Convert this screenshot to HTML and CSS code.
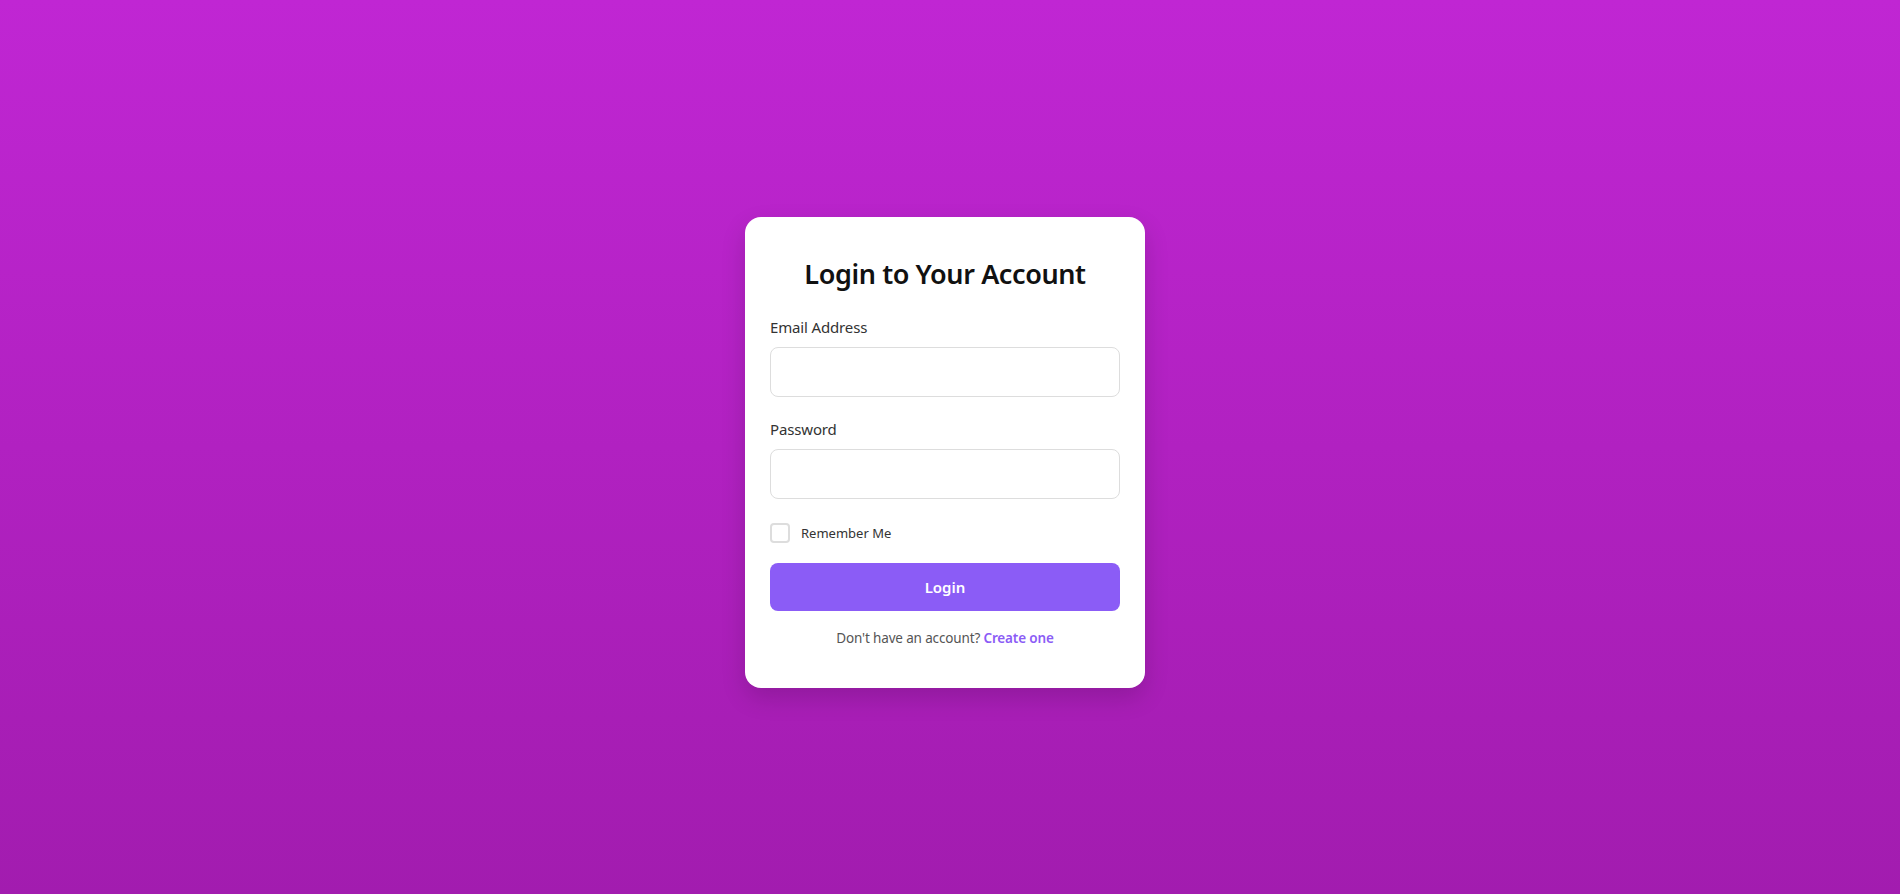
FILE: index.html
```html
<!DOCTYPE html>
<html>

<head>
    <meta charset="utf-8">
    <title>Login</title>
    <link rel="stylesheet" href="styles.css">
</head>

<body>
    <div class="login-card">
        <h2>Login to Your Account</h2>
        <form action="/login" method="post">
            <div class="field">
                <label for="email">Email Address</label>
                <input type="email" id="email" name="email">
            </div>
            <div class="field">
                <label for="password">Password</label>
                <input type="password" id="password" name="password">
            </div>
            <div class="remember">
                <input type="checkbox" id="remember" name="remember">
                <label for="remember">Remember Me</label>
            </div>
            <button type="submit">Login</button>
        </form>
        <p class="signup">Don't have an account? <a href="#">Create one</a></p>
    </div>
</body>

</html>
```

FILE: styles.css
```css
* {
  box-sizing: border-box;
}

body {
  margin: 0;
  min-height: 100vh;
  /* small offsets to sit the card where the original does */
  padding: 11px 10px 0 0;
  display: flex;
  align-items: center;
  justify-content: center;
  font-family: "Noto Sans", "Open Sans", sans-serif;
  background: linear-gradient(to bottom, #c026d3, #a21caf);
}

.login-card {
  width: 400px;
  padding: 39px 25px 40px;
  background: #fff;
  border-radius: 16px;
  box-shadow: 0 10px 25px rgba(0, 0, 0, 0.15);
}

h2 {
  margin: 0 0 23px;
  font-size: 27px;
  line-height: 36px;
  font-weight: 600;
  letter-spacing: -0.4px;
  color: #111;
  text-align: center;
}

.field {
  margin-bottom: 20px;
}

.field label {
  display: block;
  margin-bottom: 8px;
  font-size: 15px;
  line-height: 24px;
  letter-spacing: -0.15px;
  color: #333;
}

.field input {
  display: block;
  width: 100%;
  height: 50px;
  padding: 0 12px;
  font: 15px "Noto Sans", sans-serif;
  border: 1px solid #ddd;
  border-radius: 8px;
  outline: none;
}

.remember {
  display: flex;
  align-items: center;
  gap: 11px;
  margin-top: 24px;
  margin-bottom: 20px;
}

.remember input {
  appearance: none;
  margin: 0;
  width: 20px;
  height: 20px;
  border: 2px solid #ddd;
  border-radius: 4px;
  background: #fff;
}

.remember label {
  font-size: 13px;
  line-height: 20px;
  color: #333;
}

button {
  display: block;
  width: 100%;
  height: 48px;
  border: none;
  border-radius: 8px;
  background: #8b5cf6;
  color: #fff;
  font: 600 15px "Noto Sans", sans-serif;
  cursor: pointer;
}

.signup {
  margin: 17px 0 0;
  font-size: 13.5px;
  line-height: 20px;
  letter-spacing: -0.15px;
  color: #555;
  text-align: center;
}

.signup a {
  color: #8b5cf6;
  font-weight: 600;
  text-decoration: none;
}
```
